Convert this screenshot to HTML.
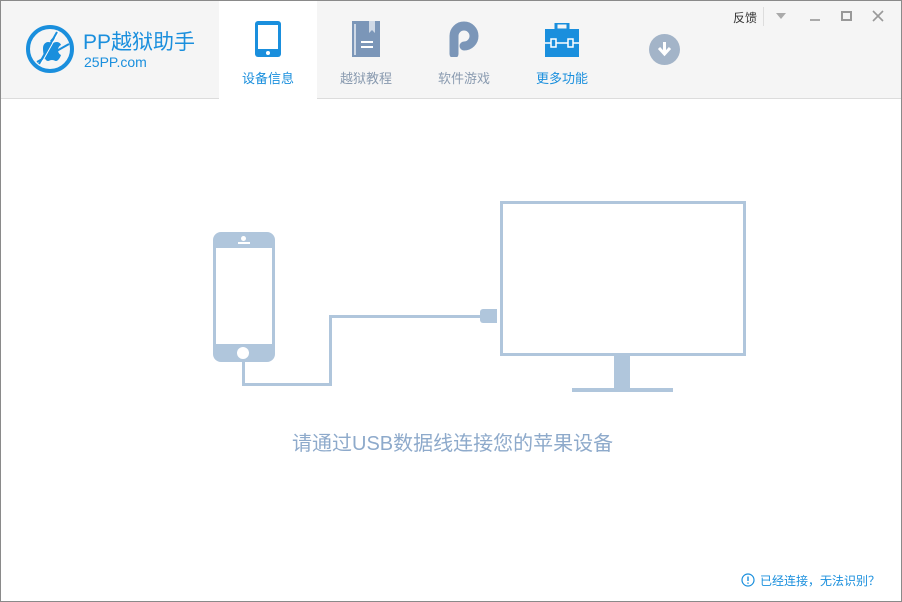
<!DOCTYPE html>
<html><head><meta charset="utf-8"><style>
*{margin:0;padding:0;box-sizing:border-box}
body{width:902px;height:602px;overflow:hidden;background:#fff;font-family:"Liberation Sans","Noto Sans CJK SC",sans-serif;position:relative}
.win{position:absolute;left:0;top:0;width:902px;height:602px;border:1px solid #8a8a8a}
.hdr{position:absolute;left:1px;top:1px;width:900px;height:98px;background:#f5f5f5;border-bottom:1px solid #dcdcdc}
.tab{position:absolute;top:1px;height:98px;width:98px;text-align:center;font-size:13px;color:#8a9bb0}
.tab .lbl{position:absolute;top:67px;left:0;width:100%}
.tab svg{position:absolute;left:50%;transform:translateX(-50%);top:20px}
.abs{position:absolute}
.c{background:#b0c6dc}
</style></head><body>
<div class="win"></div>
<div class="hdr"></div>
<svg class="abs" style="left:25px;top:24px" width="50" height="50" viewBox="0 0 50 50">
<circle cx="25" cy="25" r="22" fill="none" stroke="#1a8fdd" stroke-width="4"/>
<path d="M25 17c2-3 4-4 5-4 0 2-1 4-3 5zM18 24c0-4 3-6 5-6 2 0 3 1 4 1s3-1 5-1c2 0 4 2 4 3-2 1-3 3-3 5s1 4 3 5c-1 3-3 6-5 6-1 0-2-1-4-1s-3 1-4 1c-3 0-5-6-5-13z" fill="#1a8fdd"/>
<path d="M32 8L14 40M44 20L12 38" stroke="#1a8fdd" stroke-width="2" fill="none"/>
<path d="M34 8L16 40" stroke="#fff" stroke-width="1" fill="none"/>
</svg>
<div class="abs" style="left:83px;top:26px;font-size:21px;color:#1a8fdd">PP越狱助手</div>
<div class="abs" style="left:84px;top:54px;font-size:14px;color:#1a8fdd">25PP.com</div>
<div class="tab" style="left:219px;background:#fff;color:#1a8fdd">
<svg width="26" height="36" viewBox="0 0 26 36" style="top:20px"><rect x="0" y="0" width="26" height="36" rx="3" fill="#1a8fdd"/><rect x="3" y="4" width="20" height="24" fill="#fff"/><circle cx="13" cy="32" r="2" fill="#fff"/></svg>
<div class="lbl">设备信息</div></div>
<div class="tab" style="left:317px">
<svg width="28" height="36" viewBox="0 0 28 36" style="top:20px"><rect x="0" y="0" width="28" height="36" fill="#7b96b8"/><rect x="2" y="3" width="2" height="31" fill="#cfd9e6"/><path d="M17 0v12l3-3 3 3V0z" fill="#cfd9e6"/><rect x="9" y="20" width="12" height="2" fill="#fff"/><rect x="9" y="25" width="12" height="2" fill="#fff"/></svg>
<div class="lbl">越狱教程</div></div>
<div class="tab" style="left:415px">
<svg width="30" height="36" viewBox="0 0 30 36" style="top:20px"><path d="M5 33V15A10 10 0 1 1 15 25" fill="none" stroke="#7b96b8" stroke-width="9" stroke-linecap="round"/></svg>
<div class="lbl">软件游戏</div></div>
<div class="tab" style="left:513px;color:#1a8fdd">
<svg width="34" height="34" viewBox="0 0 34 34" style="top:22px"><rect x="11" y="0" width="12" height="7" fill="none" stroke="#1a8fdd" stroke-width="3"/><rect x="0" y="6" width="34" height="28" fill="#1a8fdd"/><path d="M0 20h34" stroke="#fff" stroke-width="1.5"/><rect x="6" y="16" width="5" height="8" fill="#1a8fdd" stroke="#fff" stroke-width="1.5"/><rect x="23" y="16" width="5" height="8" fill="#1a8fdd" stroke="#fff" stroke-width="1.5"/></svg>
<div class="lbl">更多功能</div></div>
<svg class="abs" style="left:649px;top:34px" width="31" height="31" viewBox="0 0 31 31"><circle cx="15.5" cy="15.5" r="15.5" fill="#a3b4c8"/><path d="M15.5 8v11M10 14l5.5 6 5.5-6" fill="none" stroke="#fff" stroke-width="3"/></svg>
<div class="abs" style="left:733px;top:9px;font-size:12px;color:#333">反馈</div>
<div class="abs" style="left:763px;top:7px;width:1px;height:19px;background:#ddd"></div>
<svg class="abs" style="left:776px;top:13px" width="10" height="6"><path d="M0 0h10L5 6z" fill="#aaa"/></svg>
<div class="abs" style="left:810px;top:19px;width:10px;height:2px;background:#aaa"></div>
<div class="abs" style="left:841px;top:11px;width:11px;height:10px;border:2px solid #999"></div>
<svg class="abs" style="left:872px;top:10px" width="12" height="12"><path d="M1 1l10 10M11 1L1 11" stroke="#999" stroke-width="1.6"/></svg>
<div class="abs c" style="left:213px;top:232px;width:62px;height:130px;border-radius:8px"></div>
<div class="abs" style="left:216px;top:248px;width:56px;height:96px;background:#fff"></div>
<div class="abs" style="left:241px;top:236px;width:5px;height:5px;border-radius:50%;background:#fff"></div>
<div class="abs" style="left:238px;top:242px;width:12px;height:2px;background:#fff"></div>
<div class="abs" style="left:237px;top:347px;width:12px;height:12px;border-radius:50%;background:#fff"></div>
<div class="abs c" style="left:242px;top:362px;width:3px;height:24px"></div>
<div class="abs c" style="left:242px;top:383px;width:90px;height:3px"></div>
<div class="abs c" style="left:329px;top:315px;width:3px;height:71px"></div>
<div class="abs c" style="left:329px;top:315px;width:154px;height:3px"></div>
<div class="abs c" style="left:480px;top:309px;width:17px;height:14px;border-radius:3px 0 0 3px"></div>
<div class="abs" style="left:500px;top:201px;width:246px;height:155px;border:3px solid #b0c6dc"></div>
<div class="abs c" style="left:614px;top:356px;width:16px;height:34px"></div>
<div class="abs c" style="left:572px;top:388px;width:101px;height:4px"></div>
<div class="abs" style="left:292px;top:427px;font-size:20px;color:#8eaacb;white-space:nowrap">请通过USB数据线连接您的苹果设备</div>
<svg class="abs" style="left:741px;top:573px" width="14" height="14"><circle cx="7" cy="7" r="6" fill="none" stroke="#1a8fdd" stroke-width="1.2"/><path d="M7 3.5v4.5M7 9.5v1.2" stroke="#1a8fdd" stroke-width="1.4"/></svg>
<div class="abs" style="left:760px;top:572px;font-size:12px;color:#1a8fdd">已经连接，无法识别？</div>
</body></html>
